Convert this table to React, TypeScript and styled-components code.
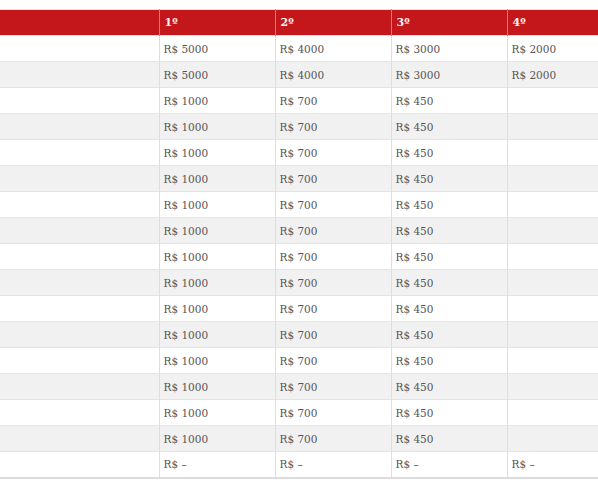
import styled, { createGlobalStyle } from "styled-components";

const GlobalStyle = createGlobalStyle`
  html, body {
    margin: 0;
    padding: 0;
    background: #fff;
    overflow: hidden;
  }
  body {
    font-family: "DejaVu Serif", "Liberation Serif", serif;
  }
`;

const headers = ["", "1º", "2º", "3º", "4º"];

const rows: string[][] = [
  ["", "R$ 5000", "R$ 4000", "R$ 3000", "R$ 2000"],
  ["", "R$ 5000", "R$ 4000", "R$ 3000", "R$ 2000"],
  ...Array.from({ length: 14 }, () => ["", "R$ 1000", "R$ 700", "R$ 450", ""]),
  ["", "R$ –", "R$ –", "R$ –", "R$ –"],
];

export default function App() {
  return (
    <>
      <GlobalStyle />
      <Wrapper>
        <PrizeTable>
          <colgroup>
            <Col $first />
            <Col />
            <Col />
            <Col />
            <Col />
          </colgroup>
          <thead>
            <tr>
              {headers.map((h, i) => (
                <HeadCell key={i}>{h}</HeadCell>
              ))}
            </tr>
          </thead>
          <tbody>
            {rows.map((row, idx) => (
              <Row key={idx} $striped={idx % 2 === 1}>
                {row.map((cell, i) => (
                  <Cell key={i}>{cell}</Cell>
                ))}
              </Row>
            ))}
          </tbody>
        </PrizeTable>
      </Wrapper>
    </>
  );
}

const Wrapper = styled.div`
  width: 598px;
  height: 487px;
  padding-top: 9px;
  box-sizing: border-box;
  overflow: hidden;
`;

const PrizeTable = styled.table`
  width: 623px;
  table-layout: fixed;
  border-collapse: collapse;
  border-top: 1px solid #e2e2e2;
  border-bottom: 2px solid #dcdcdc;
`;

const Col = styled.col<{ $first?: boolean }>`
  width: ${({ $first }) => ($first ? "159px" : "116px")};
`;

const HeadCell = styled.th`
  height: 26px;
  padding: 0 5px;
  box-sizing: border-box;
  background: #c3171b;
  border-left: 1px solid #e07a7c;
  color: #fff3f3;
  font-size: 11px;
  font-weight: 700;
  text-align: left;
  vertical-align: middle;

  &:first-child {
    border-left: none;
  }
`;

const Row = styled.tr<{ $striped: boolean }>`
  background: ${({ $striped }) => ($striped ? "#f1f1f1" : "#fff")};
  border-top: 1px solid #e4e4e4;
`;

const Cell = styled.td`
  height: 26px;
  padding: 0 4px;
  box-sizing: border-box;
  border-left: 1px solid #dedede;
  color: #555;
  font-size: 10.5px;
  white-space: nowrap;
  vertical-align: middle;

  &:first-child {
    border-left: none;
  }
`;
